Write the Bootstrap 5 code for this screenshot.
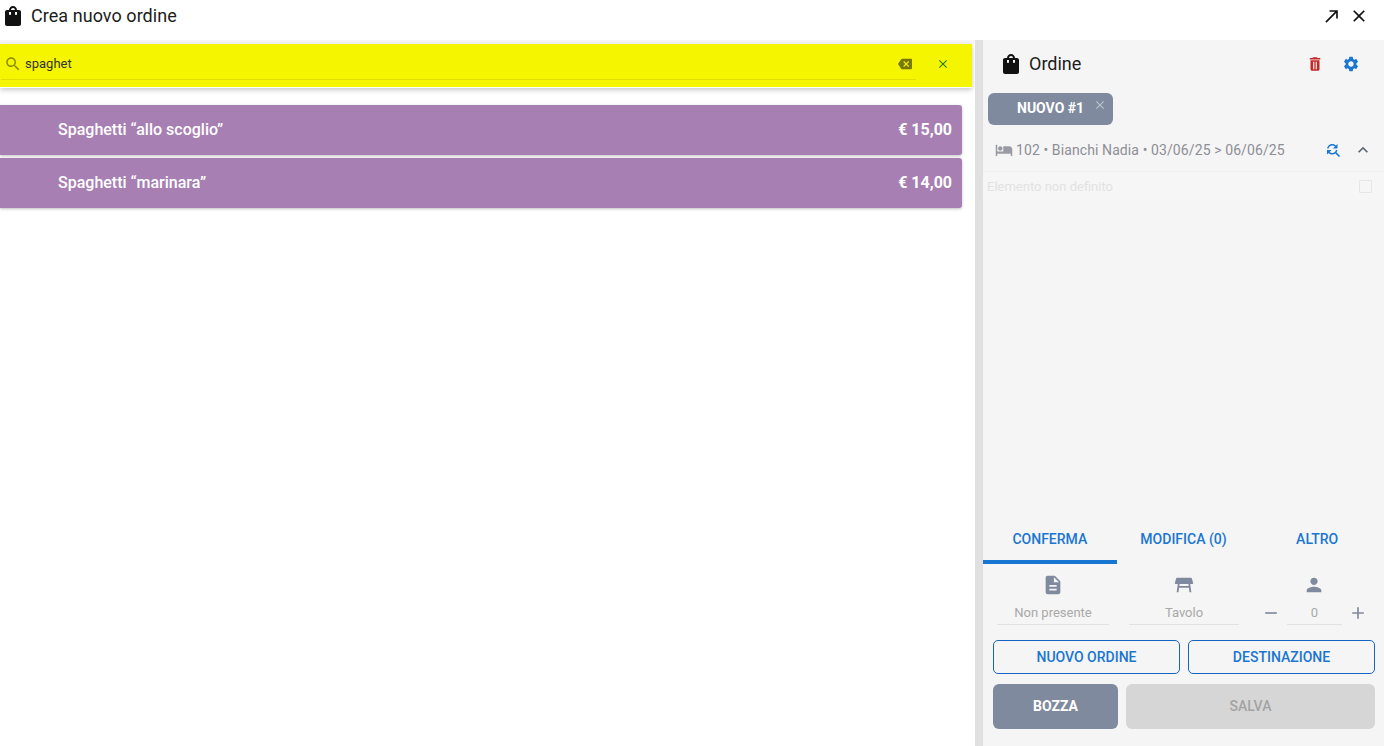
<!doctype html>
<html lang="it">
<head>
<meta charset="utf-8">
<title>Crea nuovo ordine</title>
<link href="https://cdn.jsdelivr.net/npm/bootstrap@5.3.0/dist/css/bootstrap.min.css" rel="stylesheet">
<style>
html,body{height:100%;overflow:hidden}
body{font-family:Roboto,"Liberation Sans",sans-serif;background:#fff;color:#111}
svg{display:block;fill:currentColor;flex:none}
.top-bar{height:40px;padding:0 13px 8px 1px}
.top-title{font-size:18px;line-height:32px;margin-left:6px;color:#1c1c1c;letter-spacing:.05px}
.tb-wrap{gap:3px}
.top-bar .tb-btn{width:24px;height:24px;padding:2px;color:#111}
.main-area{height:706px}
.left-pane{width:975px;padding-top:4px;background:linear-gradient(#f5f5f5 4px,#fff 4px)}
.split{width:8px;background:#e0e0e0}
.right-pane{width:401px;background:#f5f5f5}
.search-bar{width:972px;height:44px;background:#f5f500;box-shadow:0 2px 5px rgba(0,0,0,.22);margin-bottom:17px;border-bottom:1px solid #fff;padding-left:1px}
.search-field{width:915px;height:36px;border-bottom:1px solid #dfdf00;color:#333;font-size:13px;padding-top:4px}
.search-field .s-ico{color:#8a8a00;margin:0 3px 0 3px}
.s-del{color:#77770a;margin-left:auto;margin-right:4px}
.s-x{color:#2d7d10;margin:13px 0 0 20px}
.prod{width:962px;height:50px;margin-bottom:3px;background:#a87fb2;color:#fff;font-weight:500;font-size:16px;padding:0 10px 0 58px;border-radius:0 3px 3px 0;box-shadow:0 1px 3px rgba(0,0,0,.25)}
.prod .price{font-weight:700;font-size:16px}
.ord-head{height:48px;padding:0 24px 0 16px}
.ord-title{font-size:18px;color:#1c1c1c;margin:0 0 2px 6px}
.ord-trash{color:#c62828}
.ord-gear{color:#1976d2;margin-left:18px}
.chip{width:125px;height:32px;margin:5px 0 0 5px;background:#808a9e;border-radius:6px;color:#fff;font-size:14px;font-weight:700;padding-left:29px;line-height:30px}
.chip-x{color:#bcc2cd;margin:5px 0 0 9px}
.guest{height:47px;padding:4px 12px 0 12px;font-size:14px;color:#8e8e96;border-bottom:1px solid #f0f0f0;letter-spacing:.1px}
.guest .bed{color:#9a9aa2;margin-right:3px}
.guest .swap{color:#1976d2;margin-left:auto;margin-right:11px}
.guest .up{color:#5a6472;margin-right:-1px}
.empty-row{height:29px;padding:0 12px 0 4px;font-size:13px;color:#e2e2e2;background:#f6f6f6}
.chk{width:13px;height:13px;border:1px solid #e6e6e6;margin-left:auto;border-radius:1px}
.ord-foot{margin-top:auto}
.tabs-row{height:44px}
.tab-cell{width:134px;text-align:center;font-size:14px;font-weight:500;color:#1976d2;line-height:38px}
.tab-cell.on{border-bottom:4px solid #1976d2}
.info-row{padding:10px 0 0 0;height:76px}
.info{color:#808a9e}
.info .lbl{font-size:13px;color:#a9a9a9;text-align:center;line-height:16px;height:20px;border-bottom:1px solid #e2e2e2;margin-top:9px}
.i1{width:112px;margin-left:14px}
.i2{width:110px;margin-left:20px}
.i3{width:55px}
.stepper{margin-left:22px;width:107px}
.stepper svg{color:#808a9e}
.person{margin-left:42px}
.step-b{margin-top:7px}
.btn-row{padding:0 9px 0 10px;gap:8px}
.act{width:187px;height:34px;padding:0;font-size:14px;font-weight:500;color:#1976d2;border:1px solid #1565c0;border-radius:5px;background:transparent;line-height:32px}
.act:hover{color:#1976d2}
.big{height:45px;margin-top:10px;margin-bottom:17px}
.bozza,.salva{height:45px;padding:0;border:0;border-radius:6px;font-size:14px;font-weight:700}
.bozza{width:125px;background:#808a9e;color:#fff}
.salva{width:249px;background:#d6d6d6;color:#a3a3a3;font-weight:500}
</style>
</head>
<body>
<div class="top-bar d-flex align-items-center">
  <svg width="24" height="24" viewBox="0 0 24 24"><path d="M18 6h-2c0-2.21-1.79-4-4-4S8 3.79 8 6H6c-1.1 0-2 .9-2 2v12c0 1.1.9 2 2 2h12c1.1 0 2-.9 2-2V8c0-1.1-.9-2-2-2zm-8 4c0 .55-.45 1-1 1s-1-.45-1-1V8h2v2zm2-6c1.1 0 2 .9 2 2h-4c0-1.1.9-2 2-2zm4 6c0 .55-.45 1-1 1s-1-.45-1-1V8h2v2z"/></svg>
  <span class="top-title">Crea nuovo ordine</span>
  <div class="ms-auto d-flex tb-wrap">
    <div class="tb-btn"><svg width="20" height="20" viewBox="0 0 24 24"><path d="M9 5v2h6.59L4 18.59 5.41 20 17 8.41V15h2V5z"/></svg></div>
    <div class="tb-btn"><svg width="20" height="20" viewBox="0 0 24 24"><path d="M19 6.41L17.59 5 12 10.59 6.41 5 5 6.41 10.59 12 5 17.59 6.41 19 12 13.41 17.59 19 19 17.59 13.41 12z"/></svg></div>
  </div>
</div>
<div class="main-area d-flex">
  <div class="left-pane">
    <div class="search-bar d-flex align-items-start">
      <div class="search-field d-flex align-items-center">
        <svg class="s-ico" width="18" height="18" viewBox="0 0 24 24"><path d="M15.5 14h-.79l-.28-.27C15.41 12.59 16 11.11 16 9.5 16 5.91 13.09 3 9.5 3S3 5.91 3 9.5 5.91 16 9.5 16c1.61 0 3.09-.59 4.23-1.57l.27.28v.79l5 4.99L20.49 19l-4.99-5zm-6 0C7.01 14 5 11.99 5 9.5S7.01 5 9.5 5 14 7.01 14 9.5 11.99 14 9.5 14z"/></svg>
        <span>spaghet</span>
        <svg class="s-del" width="14" height="14" viewBox="0 0 24 24"><path d="M22 3H7c-.69 0-1.23.35-1.59.88L0 12l5.41 8.11c.36.53.9.89 1.59.89h15c1.1 0 2-.9 2-2V5c0-1.1-.9-2-2-2zm-3 12.59L17.59 17 14 13.41 10.41 17 9 15.59 12.59 12 9 8.41 10.41 7 14 10.59 17.59 7 19 8.41 15.41 12 19 15.59z"/></svg>
      </div>
      <svg class="s-x" width="14" height="14" viewBox="0 0 24 24"><path d="M19 6.41L17.59 5 12 10.59 6.41 5 5 6.41 10.59 12 5 17.59 6.41 19 12 13.41 17.59 19 19 17.59 13.41 12z"/></svg>
    </div>
    <div class="prod d-flex align-items-center justify-content-between"><span>Spaghetti “allo scoglio”</span><span class="price">€ 15,00</span></div>
    <div class="prod d-flex align-items-center justify-content-between"><span>Spaghetti “marinara”</span><span class="price">€ 14,00</span></div>
  </div>
  <div class="split"></div>
  <div class="right-pane d-flex flex-column">
    <div class="ord-head d-flex align-items-center">
      <svg width="24" height="24" viewBox="0 0 24 24"><path d="M18 6h-2c0-2.21-1.79-4-4-4S8 3.79 8 6H6c-1.1 0-2 .9-2 2v12c0 1.1.9 2 2 2h12c1.1 0 2-.9 2-2V8c0-1.1-.9-2-2-2zm-8 4c0 .55-.45 1-1 1s-1-.45-1-1V8h2v2zm2-6c1.1 0 2 .9 2 2h-4c0-1.1.9-2 2-2zm4 6c0 .55-.45 1-1 1s-1-.45-1-1V8h2v2z"/></svg>
      <span class="ord-title">Ordine</span>
      <svg class="ms-auto ord-trash" width="18" height="18" viewBox="0 0 24 24"><path fill-rule="evenodd" d="M6 19c0 1.1.9 2 2 2h8c1.1 0 2-.9 2-2V7H6v12zm3.5-10h1.6v10H9.5V9zm3.4 0h1.6v10h-1.6V9zM19 4h-3.5l-1-1h-5l-1 1H5v2h14V4z"/></svg>
      <svg class="ord-gear" width="18" height="18" viewBox="0 0 24 24"><path d="M19.14 12.94c.04-.3.06-.61.06-.94 0-.32-.02-.64-.07-.94l2.03-1.58c.18-.14.23-.41.12-.61l-1.92-3.32c-.12-.22-.37-.29-.59-.22l-2.39.96c-.5-.38-1.03-.7-1.62-.94l-.36-2.54c-.04-.24-.24-.41-.48-.41h-3.84c-.24 0-.43.17-.47.41l-.36 2.54c-.59.24-1.13.57-1.62.94l-2.39-.96c-.22-.08-.47 0-.59.22L2.74 8.87c-.12.21-.08.47.12.61l2.03 1.58c-.05.3-.09.63-.09.94s.02.64.07.94l-2.03 1.58c-.18.14-.23.41-.12.61l1.92 3.32c.12.22.37.29.59.22l2.39-.96c.5.38 1.03.7 1.62.94l.36 2.54c.05.24.24.41.48.41h3.84c.24 0 .44-.17.47-.41l.36-2.54c.59-.24 1.13-.56 1.62-.94l2.39.96c.22.08.47 0 .59-.22l1.92-3.32c.12-.22.07-.47-.12-.61l-2.01-1.58zM12 15.6c-1.98 0-3.6-1.62-3.6-3.6s1.62-3.6 3.6-3.6 3.6 1.62 3.6 3.6-1.62 3.6-3.6 3.6z"/></svg>
    </div>
    <div class="chip d-flex align-items-start">
      <span>NUOVO #1</span>
      <svg class="chip-x" width="14" height="14" viewBox="0 0 24 24"><path d="M19 6.41L17.59 5 12 10.59 6.41 5 5 6.41 10.59 12 5 17.59 6.41 19 12 13.41 17.59 19 19 17.59 13.41 12z"/></svg>
    </div>
    <div class="guest d-flex align-items-center">
      <svg class="bed" width="18" height="18" viewBox="0 0 24 24"><path d="M7 13c1.66 0 3-1.34 3-3S8.66 7 7 7s-3 1.34-3 3 1.34 3 3 3zm12-6h-8v7H3V5H1v15h2v-3h18v3h2v-9c0-2.21-1.79-4-4-4z"/></svg>
      <span>102 • Bianchi Nadia • 03/06/25 &gt; 06/06/25</span>
      <svg class="swap" width="18" height="18" viewBox="0 0 24 24"><path d="M11 6c1.38 0 2.63.56 3.54 1.46L12 10h6V4l-2.05 2.05C14.68 4.78 12.93 4 11 4c-3.53 0-6.43 2.61-6.92 6H6.1c.46-2.28 2.48-4 4.9-4zm5.64 9.14c.66-.9 1.12-1.97 1.28-3.14H15.9c-.46 2.28-2.48 4-4.9 4-1.38 0-2.63-.56-3.54-1.46L10 12H4v6l2.05-2.05C7.32 17.22 9.07 18 11 18c1.55 0 2.98-.51 4.14-1.36L20 21.49 21.49 20l-4.85-4.86z"/></svg>
      <svg class="up" width="20" height="20" viewBox="0 0 24 24"><path d="M12 8l-6 6 1.41 1.41L12 10.83l4.59 4.58L18 14z"/></svg>
    </div>
    <div class="empty-row d-flex align-items-center">
      <span>Elemento non definito</span>
      <span class="chk"></span>
    </div>
    <div class="ord-foot">
      <div class="tabs-row d-flex">
        <div class="tab-cell on">CONFERMA</div>
        <div class="tab-cell">MODIFICA (0)</div>
        <div class="tab-cell">ALTRO</div>
      </div>
      <div class="info-row d-flex align-items-start">
        <div class="info i1">
          <svg class="mx-auto" width="22" height="22" viewBox="0 0 24 24"><path d="M14 2H6c-1.1 0-1.99.9-1.99 2L4 20c0 1.1.89 2 1.99 2H18c1.1 0 2-.9 2-2V8l-6-6zm2 16H8v-2h8v2zm0-4H8v-2h8v2zm-3-5V3.5L18.5 9H13z"/></svg>
          <div class="lbl">Non presente</div>
        </div>
        <div class="info i2">
          <svg class="mx-auto" width="22" height="22" viewBox="0 0 24 24"><path d="M21.96 9.73l-1.43-5C20.41 4.3 20.02 4 19.57 4H4.43c-.45 0-.84.3-.96.73l-1.43 5C1.86 10.36 2.34 11 3 11h2.2L4 20h2l.67-5h10.67l.66 5h2l-1.2-9H21c.66 0 1.14-.64.96-1.27zM6.93 13l.27-2h9.6l.27 2H6.93z"/></svg>
          <div class="lbl">Tavolo</div>
        </div>
        <div class="info stepper">
          <svg class="person" width="22" height="22" viewBox="0 0 24 24"><path d="M12 12c2.21 0 4-1.79 4-4s-1.79-4-4-4-4 1.79-4 4 1.79 4 4 4zm0 2c-2.67 0-8 1.34-8 4v2h16v-2c0-2.66-5.33-4-8-4z"/></svg>
          <div class="d-flex align-items-start justify-content-between">
            <svg class="step-b" width="20" height="20" viewBox="0 0 24 24"><path d="M19 13H5v-2h14v2z"/></svg>
            <div class="lbl i3">0</div>
            <svg class="step-b" width="20" height="20" viewBox="0 0 24 24"><path d="M19 13h-6v6h-2v-6H5v-2h6V5h2v6h6v2z"/></svg>
          </div>
        </div>
      </div>
      <div class="btn-row d-flex">
        <button class="btn act" type="button">NUOVO ORDINE</button>
        <button class="btn act" type="button">DESTINAZIONE</button>
      </div>
      <div class="btn-row big d-flex">
        <button class="btn bozza" type="button">BOZZA</button>
        <button class="btn salva" type="button">SALVA</button>
      </div>
    </div>
  </div>
</div>
<script src="https://cdn.jsdelivr.net/npm/bootstrap@5.3.0/dist/js/bootstrap.bundle.min.js"></script>
</body>
</html>
